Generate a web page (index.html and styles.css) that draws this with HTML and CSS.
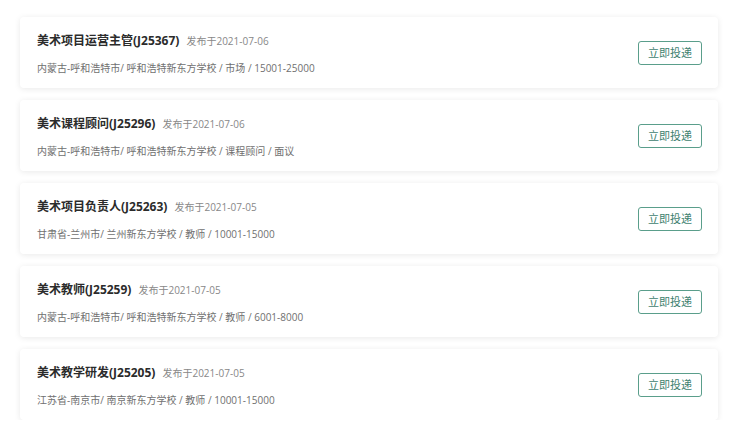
FILE: index.html
```html
<!DOCTYPE html>
<html>
<head>
<meta charset="utf-8">
<title>职位列表</title>
<link rel="stylesheet" href="styles.css">
</head>
<body>
	<div class="list">
		<div class="job">
			<div class="info">
				<div class="title"><b>美术项目运营主管(J25367)</b><span>发布于2021-07-06</span></div>
				<div class="desc">内蒙古-呼和浩特市/ 呼和浩特新东方学校 / 市场 / 15001-25000</div>
			</div>
			<a class="apply" href="#">立即投递</a>
		</div>
		<div class="job">
			<div class="info">
				<div class="title"><b>美术课程顾问(J25296)</b><span>发布于2021-07-06</span></div>
				<div class="desc">内蒙古-呼和浩特市/ 呼和浩特新东方学校 / 课程顾问 / 面议</div>
			</div>
			<a class="apply" href="#">立即投递</a>
		</div>
		<div class="job">
			<div class="info">
				<div class="title"><b>美术项目负责人(J25263)</b><span>发布于2021-07-05</span></div>
				<div class="desc">甘肃省-兰州市/ 兰州新东方学校 / 教师 / 10001-15000</div>
			</div>
			<a class="apply" href="#">立即投递</a>
		</div>
		<div class="job">
			<div class="info">
				<div class="title"><b>美术教师(J25259)</b><span>发布于2021-07-05</span></div>
				<div class="desc">内蒙古-呼和浩特市/ 呼和浩特新东方学校 / 教师 / 6001-8000</div>
			</div>
			<a class="apply" href="#">立即投递</a>
		</div>
		<div class="job">
			<div class="info">
				<div class="title"><b>美术教学研发(J25205)</b><span>发布于2021-07-05</span></div>
				<div class="desc">江苏省-南京市/ 南京新东方学校 / 教师 / 10001-15000</div>
			</div>
			<a class="apply" href="#">立即投递</a>
		</div>
	</div>
</body>
</html>
```
FILE: styles.css
```css
*{margin:0; padding:0;}
body{background:#fff; font-family:"Open Sans","Noto Sans CJK SC",sans-serif; color:#333;}
.list{display:flex; flex-direction:column; gap:12px; width:698px; padding:17px 0 0 20px;}
.job{display:flex; align-items:center; justify-content:space-between; height:71px; padding:0 16px 0 17px; box-sizing:border-box; background:#fff; border-radius:4px; box-shadow:0 1px 6px rgba(0,0,0,0.09);}
.job .info{margin-top:1px;}
.job .title{display:flex; align-items:baseline; height:20px; line-height:20px;}
.job .title b{font-size:12px; font-weight:bold; color:#2b2b2b;}
.job .title span{margin-left:7px; font-size:10px; color:#888;}
.job .desc{margin-top:9px; font-size:10px; line-height:16px; color:#707070;}
.apply{display:block; width:64px; height:24px; line-height:22px; box-sizing:border-box; border:1px solid #5a9e8b; border-radius:3px; text-align:center; font-size:11px; color:#3f8270; text-decoration:none;}
```
